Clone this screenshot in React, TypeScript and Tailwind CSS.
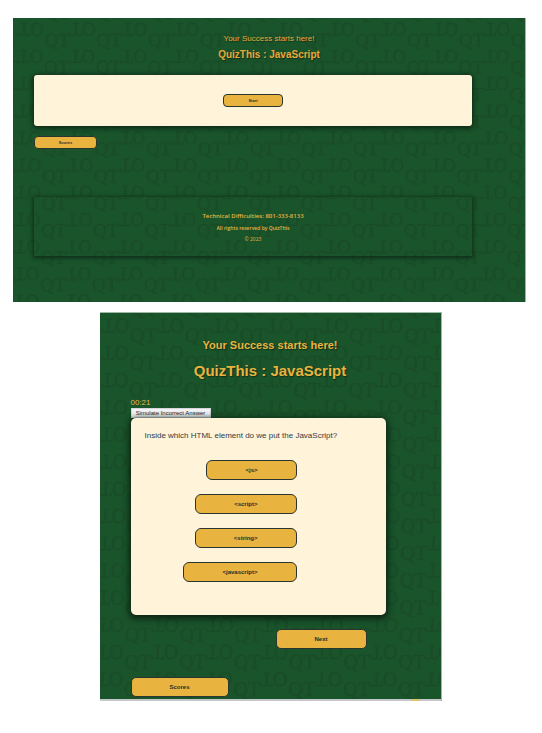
import { ReactNode } from "react";

const answers = ["<js>", "<script>", "<string>", "<javascript>"];

type PatternProps = { id: string; width: number; x: number; y: number; size: number };

function Monogram({ id, width, x, y, size }: PatternProps) {
  const half = width / 2;
  return (
    <svg aria-hidden="true" className="absolute inset-0 -z-10 h-full w-full">
      <defs>
        <pattern
          id={id}
          width={width}
          height={27.2}
          patternUnits="userSpaceOnUse"
          patternTransform={`translate(${x} ${y}) skewX(-1)`}
        >
          <g
            fill="#194d27"
            stroke="#174724"
            strokeWidth="0.4"
            fontFamily="Liberation Serif, serif"
            fontSize={size}
          >
            <text x={half} y="24">QT</text>
            <text transform="rotate(180)" x={-half + 1} y="-1">QT</text>
          </g>
        </pattern>
      </defs>
      <rect width="100%" height="100%" fill={`url(#${id})`} />
    </svg>
  );
}

function GoldButton({ className, children }: { className: string; children: ReactNode }) {
  return (
    <button
      type="button"
      className={`flex items-center justify-center border border-[#2a3530] bg-[#e8b33f] text-[#26302c] ${className}`}
    >
      {children}
    </button>
  );
}

function StartScreen() {
  return (
    <section className="relative isolate overflow-hidden border-r border-[#9db8a5] bg-[#1a542b] pt-4 pb-[46px]">
      <Monogram id="monogram-start" width={51.8} x={6} y={4} size={19} />
      <header className="flex flex-col items-center gap-1 text-center text-[#e8a93a] [text-shadow:1px_1px_1px_#12301a]">
        <p className="text-[8px] leading-[9px]">Your Success starts here!</p>
        <h1 className="text-[10px] leading-[16px] font-bold">QuizThis : JavaScript</h1>
      </header>
      <main className="mr-[53px] ml-[21px] pt-3">
        <div className="flex h-[51px] items-center justify-center rounded-[3px] bg-[#fff3da] shadow-[0_1px_5px_1px_#0c2413]">
          <GoldButton className="h-[13px] w-[60px] rounded-[4px] text-[4px] font-bold">Start</GoldButton>
        </div>
        <GoldButton className="mt-[10px] h-[13px] w-[63px] rounded-[4px] text-[4px] font-bold">Scores</GoldButton>
      </main>
      <footer className="mt-12 mr-[53px] ml-[21px] flex h-[59px] flex-col items-center pt-[14px] font-['Open_Sans',sans-serif] text-[#e8b33f] shadow-[0_1px_4px_1px_#0f2c18]">
        <p className="text-[6px] leading-[10px] font-semibold">Technical Difficulties: 801-333-8133</p>
        <p className="mt-[3px] text-[5px] leading-[8px] font-semibold">All rights reserved by QuizThis</p>
        <p className="mt-[3px] text-[5px] leading-[8px]">© 2023</p>
      </footer>
    </section>
  );
}

function QuestionScreen() {
  return (
    <section className="relative isolate mx-auto mt-[10px] w-full max-w-[342px] overflow-hidden border-t border-r border-[#9db8a5] bg-[#1a542b]">
      <Monogram id="monogram-quiz" width={54.8} x={3} y={5} size={20} />
      <header className="flex flex-col items-center gap-[9px] pt-6 text-center text-[#e8b33f] [text-shadow:1px_1px_1px_#12301a]">
        <p className="text-[11px] leading-[16px] font-bold">Your Success starts here!</p>
        <h2 className="text-[15px] leading-[18px] font-bold">QuizThis : JavaScript</h2>
      </header>
      <main className="mr-[55px] ml-[31px] pt-[18px]">
        <p className="text-[8px] leading-[10px] text-[#e8b33f]">00:21</p>
        <button type="button" className="flex h-[10px] w-20 items-center justify-center border border-[#d5d5dc] bg-[#f2f2f5] text-[6px] whitespace-nowrap text-[#222]">
          Simulate Incorrect Answer
        </button>
        <div className="h-[197px] rounded-[5px] bg-[#fff3da] pt-[13px] pr-[89px] pl-[14px] shadow-[0_2px_6px_2px_#0c2413]">
          <p className="text-[8px] leading-[10px] whitespace-nowrap text-[#333a40]">
            Inside which HTML element do we put the JavaScript?
          </p>
          <div className="mt-[19px] flex flex-col items-end gap-[14px]">
            {answers.map((answer) => (
              <GoldButton key={answer} className="h-5 rounded-[6px] px-[38px] text-[6px] font-bold">
                {answer}
              </GoldButton>
            ))}
          </div>
        </div>
        <GoldButton className="mt-[14px] mr-[19px] ml-auto h-5 w-[91px] rounded-[5px] text-[6px] font-bold">Next</GoldButton>
        <GoldButton className="mt-[28px] h-5 w-[98px] rounded-[5px] text-[6px] font-bold">Scores</GoldButton>
      </main>
      <div className="mt-[2px] flex h-[2px] justify-end bg-[#c4c8c8] pr-[21px]">
        <span className="w-[9px] bg-[#d9c66b]" />
      </div>
    </section>
  );
}

export default function App() {
  return (
    <div className="bg-white pt-[18px] pr-4 pb-8 pl-[13px] font-['Liberation_Sans',Arial,sans-serif]">
      <StartScreen />
      <div className="pl-[2px]">
        <QuestionScreen />
      </div>
    </div>
  );
}
